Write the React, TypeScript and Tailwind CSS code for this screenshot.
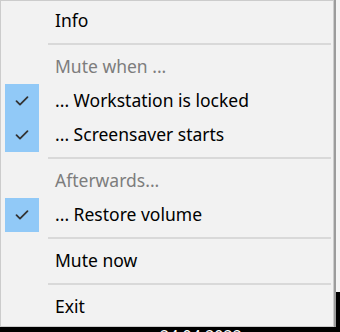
import { Fragment } from "react";

type Item =
  | { kind: "item"; label: string; checked?: boolean; disabled?: boolean }
  | { kind: "sep" };

const items: Item[] = [
  { kind: "item", label: "Info" },
  { kind: "sep" },
  { kind: "item", label: "Mute when ...", disabled: true },
  { kind: "item", label: "... Workstation is locked", checked: true },
  { kind: "item", label: "... Screensaver starts", checked: true },
  { kind: "sep" },
  { kind: "item", label: "Afterwards...", disabled: true },
  { kind: "item", label: "... Restore volume", checked: true },
  { kind: "sep" },
  { kind: "item", label: "Mute now" },
  { kind: "sep" },
  { kind: "item", label: "Exit" },
];

function Check() {
  return (
    <svg width="16" height="12" viewBox="0 0 16 12" fill="none">
      <path
        d="M2.5 6.2 6 9.6 13.5 2.2"
        stroke="#333"
        strokeWidth="1.8"
        strokeLinecap="round"
        strokeLinejoin="round"
      />
    </svg>
  );
}

export default function App() {
  return (
    <div
      className="w-[340px] h-[332px] flex flex-col overflow-hidden bg-black"
      style={{ fontFamily: '"Noto Sans", "Open Sans", sans-serif' }}
    >
      <div className="flex h-[327px]">
        <div className="w-[334px] border border-[#cccccc] bg-[#f2f2f2] pt-[3px] pb-[2px] pl-[3px] pr-[2px] flex flex-col">
          {items.map((it, i) => (
            <Fragment key={i}>
              {it.kind === "sep" ? (
                <div className="h-[12px] flex items-center pl-[44px]">
                  <div className="h-[2px] w-full bg-[#d9d9d9]" />
                </div>
              ) : (
                <div className="h-[34px] flex items-center">
                  <div
                    className={
                      "w-[34px] h-[34px] ml-[1px] flex items-center justify-center " +
                      (it.checked ? "bg-[#91c9f7]" : "")
                    }
                  >
                    {it.checked && <Check />}
                  </div>
                  <span
                    className={
                      "ml-[16px] text-[17.5px] leading-none " +
                      (it.disabled ? "text-[#7d7d7d]" : "text-black")
                    }
                  >
                    {it.label}
                  </span>
                </div>
              )}
            </Fragment>
          ))}
        </div>
        <div className="w-[2px] bg-[#9c9c9c]" />
        <div className="flex-1 flex flex-col">
          <div className="h-[292px] bg-[#f4f4f4]" />
          <div className="flex-1 bg-black" />
        </div>
      </div>
      <div className="h-[5px] overflow-hidden bg-black text-white text-[16px] leading-none flex items-start">
        <span className="ml-[160px] mt-[1px]">24.04.2022</span>
      </div>
    </div>
  );
}
